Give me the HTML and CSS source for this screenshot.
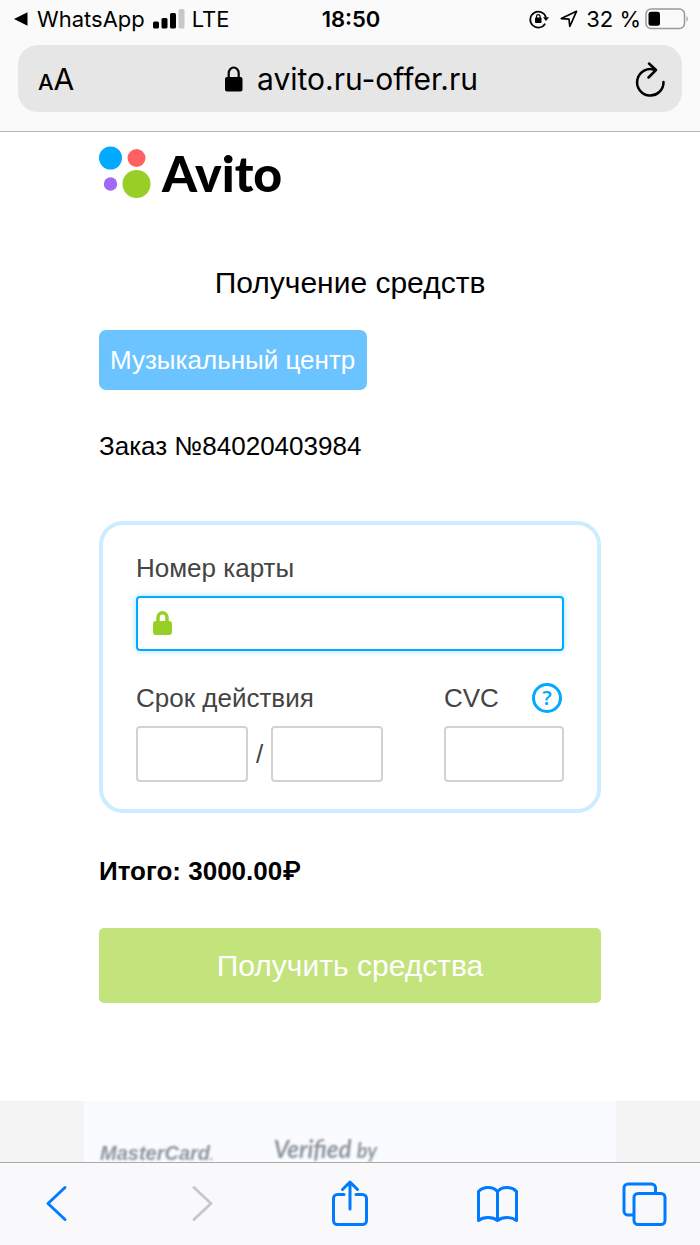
FILE: index.html
```html
<!DOCTYPE html>
<html lang="ru">
<head>
    <meta charset="UTF-8">
    <meta name="viewport" content="width=device-width, initial-scale=1.0">
    <title>Получение средств</title>
    <link rel="stylesheet" href="styles.css">
</head>
<body>
    <header class="browser-top">
        <!-- Строка состояния -->
        <div class="status-bar">
            <div class="status-left">
                <svg width="16" height="16" viewBox="0 0 16 16"><path d="M1 8 14.500 1.200V14.800Z"/></svg>
                <span class="status-app">WhatsApp</span>
                <svg class="signal" width="32" height="20" viewBox="0 0 32 20">
                    <rect x="0" y="12.500" width="6" height="7" rx="1.500"/>
                    <rect x="8.500" y="9" width="6" height="10.500" rx="1.500"/>
                    <rect x="17" y="4" width="6" height="15.500" rx="1.500"/>
                    <rect x="25.500" y="0" width="6" height="19.500" rx="1.500" fill="#c8c8c8"/>
                </svg>
                <span>LTE</span>
            </div>
            <div class="status-time">18:50</div>
            <div class="status-right">
                <svg width="20" height="20" viewBox="0 0 20 20" fill="none" stroke="#000" stroke-width="1.700">
                    <path d="M16.200 14.600A8 8 0 1 1 17 8.500"/>
                    <path d="M14 8.200H20L17 12Z" fill="#000" stroke="none"/>
                    <rect x="6" y="8.500" width="6.500" height="5.500" rx="0.800" fill="#000" stroke="none"/>
                    <path d="M7.500 9V7.500a1.800 1.800 0 0 1 3.600 0V9" stroke-width="1.200"/>
                </svg>
                <svg class="location" width="18" height="18" viewBox="0 0 18 18" fill="none" stroke="#000" stroke-width="1.700" stroke-linejoin="round"><path d="M16.500 1.300 1.300 8.600 9 9.200 9.800 16.500Z"/></svg>
                <span>32 %</span>
                <svg class="battery" width="44" height="22" viewBox="0 0 44 22">
                    <rect x="1" y="1" width="38.500" height="19.500" rx="5" fill="none" stroke="#999" stroke-width="1.500"/>
                    <rect x="3.500" y="3.800" width="11.500" height="14" rx="2.500"/>
                    <path d="M41.500 7.500q2.600 3.300 0 6.500z" fill="#999"/>
                </svg>
            </div>
        </div>

        <!-- Адресная строка -->
        <div class="address-bar">
            <button class="text-size" type="button" aria-label="Размер текста"><small>A</small>A</button>
            <div class="address">
                <svg width="18" height="26" viewBox="0 0 18 26">
                    <rect x="0" y="11" width="17.500" height="14.500" rx="2"/>
                    <path d="M3.700 12V7.200a5 5.700 0 0 1 10 0V12" fill="none" stroke="#000" stroke-width="2.200"/>
                </svg>
                <span>avito.ru-offer.ru</span>
            </div>
            <button class="reload" type="button" aria-label="Обновить">
                <svg width="30" height="36" viewBox="0 0 30 36" fill="none" stroke="#000" stroke-width="2.500" stroke-linecap="round" stroke-linejoin="round">
                    <path d="M28.500 21A13.200 13.200 0 1 1 20 9"/>
                    <path d="M14 2.500 21 9 13.500 16.500"/>
                </svg>
            </button>
        </div>
    </header>

    <main class="page">
        <div class="content">
            <a class="logo" href="#">
                <svg width="52" height="52" viewBox="0 0 52 52">
                    <circle cx="11.500" cy="11" r="11.500" fill="#00aaff"/>
                    <circle cx="37.500" cy="11" r="9" fill="#ff6163"/>
                    <circle cx="11.500" cy="37" r="6.700" fill="#a169f7"/>
                    <circle cx="37.500" cy="37" r="14" fill="#97cf26"/>
                </svg>
                <span>Avito</span>
            </a>

            <h1 class="title">Получение средств</h1>
            <div class="product">Музыкальный центр</div>
            <p class="order">Заказ №84020403984</p>

            <form class="payment">
                <div class="card">
                    <div class="field">
                        <label for="number">Номер карты</label>
                        <div class="number-box">
                            <svg width="19" height="25" viewBox="0 0 19 25">
                                <rect x="0" y="10" width="19" height="14" rx="3" fill="#97cf26"/>
                                <path d="M5 12V6.500a4.500 4.700 0 0 1 9 0V12" fill="none" stroke="#97cf26" stroke-width="3.500"/>
                            </svg>
                            <input id="number" type="text" inputmode="numeric">
                        </div>
                    </div>
                    <div class="card-row">
                        <div class="field">
                            <label for="month">Срок действия</label>
                            <div class="expiry">
                                <input class="box" id="month" type="text" inputmode="numeric">
                                <span>/</span>
                                <input class="box" type="text" inputmode="numeric" aria-label="Год">
                            </div>
                        </div>
                        <div class="field cvc">
                            <div class="cvc-head">
                                <label for="cvc">CVC</label>
                                <button class="help" type="button">?</button>
                            </div>
                            <input class="box" id="cvc" type="text" inputmode="numeric">
                        </div>
                    </div>
                </div>

                <p class="total">Итого: 3000.00<span>₽</span></p>
                <button class="submit" type="button">Получить средства</button>
            </form>
        </div>

        <footer class="footer">
            <div class="footer-inner">
                <div class="mastercard">MasterCard<small>.</small></div>
                <div class="verified">Verified <small>by</small><b>VISA</b></div>
            </div>
        </footer>
    </main>

    <!-- Нижняя панель браузера -->
    <nav class="toolbar">
        <button type="button" aria-label="Назад">
            <svg width="44" height="44" viewBox="0 0 44 44"><path d="M31 5.500 14 21.500 31 37.500"/></svg>
        </button>
        <button class="off" type="button" aria-label="Вперёд">
            <svg width="44" height="44" viewBox="0 0 44 44"><path d="M13 5.500 30 21.500 13 37.500"/></svg>
        </button>
        <button type="button" aria-label="Поделиться">
            <svg width="44" height="44" viewBox="0 0 44 44"><path d="M16 12.500H9.500a4 4 0 0 0-4 4v22a4 4 0 0 0 4 4h25a4 4 0 0 0 4-4V16.500a4 4 0 0 0-4-4H28M22 27V0M14.500 7.500 22 0l7.500 7.500"/></svg>
        </button>
        <button type="button" aria-label="Закладки">
            <svg width="44" height="44" viewBox="0 0 44 44"><path d="M22.500 9.500C17.500 4 8 4.500 3.500 9.500V38.500c5-4 14-4 19 0 5-4 14-4 19 0V9.500C37 4.500 27.500 4 22.500 9.500V38.500"/></svg>
        </button>
        <button type="button" aria-label="Вкладки">
            <svg width="44" height="44" viewBox="0 0 44 44"><path d="M11 33H6a4 4 0 0 1-4-4V6a4 4 0 0 1 4-4h23.500a4 4 0 0 1 4 4V11"/><rect x="12" y="11.500" width="31" height="31" rx="4"/></svg>
        </button>
    </nav>
</body>
</html>
```

FILE: styles.css
```css
* {
    box-sizing: border-box;
}

body {
    margin: 0;
    height: 100vh;
    display: flex;
    flex-direction: column;
    background: #fff;
    color: #000;
    font-family: "Liberation Sans", Arial, sans-serif;
    font-size: 26px;
}

svg {
    display: block;
    flex: none;
    overflow: visible;
}

button {
    border: 0;
    padding: 0;
    background: none;
    font-family: inherit;
    color: inherit;
    cursor: pointer;
}

/* Верх браузера */
.browser-top {
    flex: none;
    padding-bottom: 19px;
    background: #fafafa;
    border-bottom: 1px solid #b8b8b8;
    font-family: Inter, sans-serif;
}

.status-bar {
    display: grid;
    grid-template-columns: 1fr auto 1fr;
    align-items: center;
    height: 38px;
    padding: 0 11px 0 13px;
    font-size: 22px;
}

.status-left,
.status-right {
    display: flex;
    align-items: center;
}

.status-app {
    margin-left: 8px;
}

.signal {
    margin: 0 7px 0 8px;
}

.status-time {
    font-weight: 600;
}

.status-right {
    justify-content: flex-end;
}

.location {
    margin: 0 8px 0 11px;
}

.battery {
    margin-left: 4px;
}

/* Адресная строка */
.address-bar {
    display: grid;
    grid-template-columns: 1fr auto 1fr;
    align-items: center;
    height: 67px;
    margin: 7px 18px 0;
    padding: 0 17px 0 20px;
    background: #e6e6e6;
    border-radius: 20px;
}

.text-size {
    justify-self: start;
    font-size: 30px;
}

.text-size small {
    font-size: 22px;
    font-weight: 500;
}

.address {
    display: flex;
    align-items: center;
    gap: 14px;
    font-size: 30px;
}

.reload {
    justify-self: end;
}

/* Страница */
.page {
    flex: 1;
    min-height: 0;
    display: flex;
    flex-direction: column;
    overflow-y: auto;
    scrollbar-width: none;
}

.content {
    flex: none;
    padding: 14px 99px 98px;
}

.logo {
    display: flex;
    align-items: center;
    gap: 11px;
    height: 54px;
    color: #000;
    font-family: Lato, sans-serif;
    font-size: 50px;
    font-weight: 900;
    text-decoration: none;
}

.title {
    margin: 66px 0 30px;
    font-size: 30px;
    font-weight: 400;
    line-height: 34px;
    text-align: center;
}

.product {
    width: fit-content;
    padding: 14px 12px 14px 11px;
    border-radius: 7px;
    background: #6bc4ff;
    color: #fff;
    line-height: 32px;
}

.order {
    margin: 40px 0 59px;
    line-height: 32px;
}

/* Карта */
.card {
    padding: 27px 33px;
    border: 4px solid #cbedff;
    border-radius: 24px;
    color: #444;
}

.field {
    display: flex;
    flex-direction: column;
    gap: 12px;
}

.field label {
    line-height: 32px;
}

.number-box {
    display: flex;
    align-items: center;
    gap: 12px;
    height: 55px;
    padding: 0 15px;
    border: 2px solid #0af;
    border-radius: 4px;
    box-shadow: 0 0 6px #a5e0ff;
}

.number-box input {
    flex: 1;
    min-width: 0;
    border: 0;
    outline: 0;
    background: none;
    font: inherit;
}

.card-row {
    display: flex;
    justify-content: space-between;
    margin-top: 31px;
}

.expiry {
    display: flex;
    align-items: center;
    gap: 8px;
}

.box {
    width: 112px;
    height: 56px;
    border: 2px solid #d2d2d2;
    border-radius: 4px;
    background: #fff;
    font: inherit;
}

.cvc .box {
    width: 120px;
}

.cvc-head {
    display: flex;
    align-items: center;
    justify-content: space-between;
    height: 32px;
    padding-right: 2px;
}

.help {
    width: 30px;
    height: 30px;
    border: 3px solid #0af;
    border-radius: 50%;
    color: #0af;
    font-family: "Noto Sans", sans-serif;
    font-size: 20px;
    font-weight: 600;
    line-height: 24px;
}

.total {
    margin: 42px 0 41px;
    font-weight: 700;
    line-height: 31px;
}

.total span {
    font-family: Inter, sans-serif;
    font-weight: 600;
}

.submit {
    display: block;
    width: 100%;
    height: 75px;
    border-radius: 5px;
    background: #c3e37d;
    color: #fff;
    font-size: 30px;
}

/* Логотипы платёжных систем */
.footer {
    flex: none;
    padding: 0 84px;
    background: #f4f4f4;
}

.footer-inner {
    display: flex;
    align-items: flex-start;
    gap: 60px;
    height: 140px;
    padding: 34px 16px;
    background: #fafbfe;
    color: #8d959f;
    font-family: Lato, sans-serif;
    font-size: 24px;
    font-style: italic;
    font-weight: 700;
    line-height: 28px;
}

.mastercard,
.verified {
    filter: blur(1px);
}

.mastercard {
    padding-top: 4px;
    font-family: "Liberation Sans", Arial, sans-serif;
    font-size: 20px;
}

.mastercard small {
    font-size: 12px;
}

.verified small {
    font-size: 20px;
}

.verified b {
    display: block;
    padding-left: 24px;
    font-size: 30px;
    line-height: 24px;
}

/* Нижняя панель */
.toolbar {
    flex: none;
    display: flex;
    justify-content: space-between;
    height: 83px;
    padding: 19px 34px 0;
    border-top: 1px solid #aaa;
    background: #f9f9fb;
}

.toolbar button {
    width: 44px;
    height: 44px;
}

.toolbar svg {
    fill: none;
    stroke: #007aff;
    stroke-width: 3;
    stroke-linecap: round;
    stroke-linejoin: round;
}

.toolbar .off svg {
    stroke: #c8c8ca;
}
```
